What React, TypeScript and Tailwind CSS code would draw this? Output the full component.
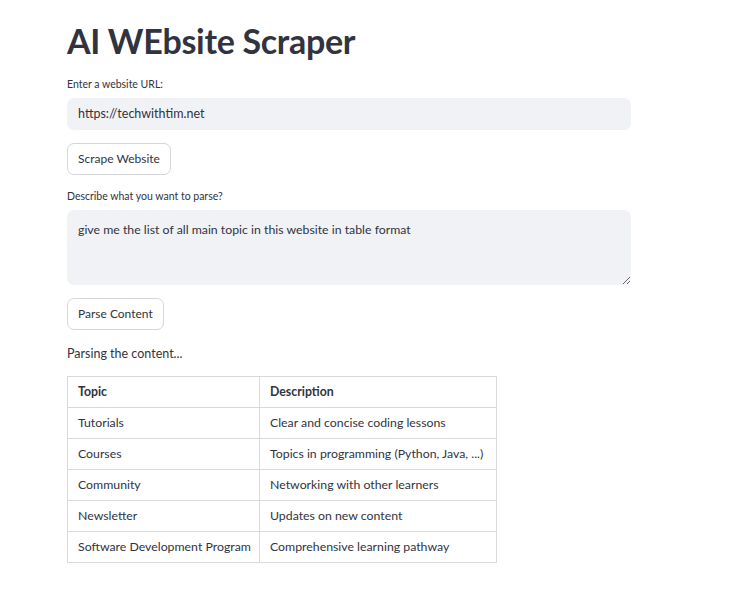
import React from 'react';

const rows = [
  ['Tutorials', 'Clear and concise coding lessons'],
  ['Courses', 'Topics in programming (Python, Java, ...)'],
  ['Community', 'Networking with other learners'],
  ['Newsletter', 'Updates on new content'],
  ['Software Development Program', 'Comprehensive learning pathway'],
];

export default function App() {
  return (
    <div className="min-h-[591px] w-[750px] bg-white text-[#31333F] font-['Lato','Noto_Sans',sans-serif]">
      <div className="flex flex-col pl-[67px] pt-[20px]">
        <h1 className="text-[34px] font-bold leading-[42px] tracking-[-0.3px]">AI WEbsite Scraper</h1>

        <label className="mt-[15px] text-[10.5px] leading-[14px]">Enter a website URL:</label>
        <div className="mt-[7px] flex h-[32px] w-[564px] items-center rounded-[7px] bg-[#f0f2f6] px-[11px] text-[12.5px]">
          https://techwithtim.net
        </div>

        <button className="mt-[13px] h-[32px] w-fit rounded-[7px] border border-[#d5d6da] bg-white px-[10px] text-[12px]">
          Scrape Website
        </button>

        <label className="mt-[14px] text-[10.5px] leading-[14px]">Describe what you want to parse?</label>
        <textarea
          readOnly
          value="give me the list of all main topic in this website in table format"
          className="mt-[7px] h-[75px] w-[564px] resize-y rounded-[7px] bg-[#f0f2f6] px-[11px] py-[12px] text-[12.3px] leading-[16px] text-[#31333F] outline-none"
        />

        <button className="mt-[13px] h-[32px] w-fit rounded-[7px] border border-[#d5d6da] bg-white px-[10px] text-[12px]">
          Parse Content
        </button>

        <p className="mt-[15px] text-[12.5px] leading-[18px]">Parsing the content...</p>

        <table className="mt-[13px] w-[430px] table-fixed border-collapse text-[12.3px]">
          <colgroup>
            <col className="w-[192px]" />
            <col />
          </colgroup>
          <thead>
            <tr className="h-[31px]">
              <th className="border border-[#d9d9dd] px-[10px] text-left font-bold">Topic</th>
              <th className="border border-[#d9d9dd] px-[10px] text-left font-bold">Description</th>
            </tr>
          </thead>
          <tbody>
            {rows.map(([t, d]) => (
              <tr key={t} className="h-[31px]">
                <td className="whitespace-nowrap border border-[#d9d9dd] px-[10px]">{t}</td>
                <td className="whitespace-nowrap border border-[#d9d9dd] px-[10px]">{d}</td>
              </tr>
            ))}
          </tbody>
        </table>
      </div>
    </div>
  );
}
